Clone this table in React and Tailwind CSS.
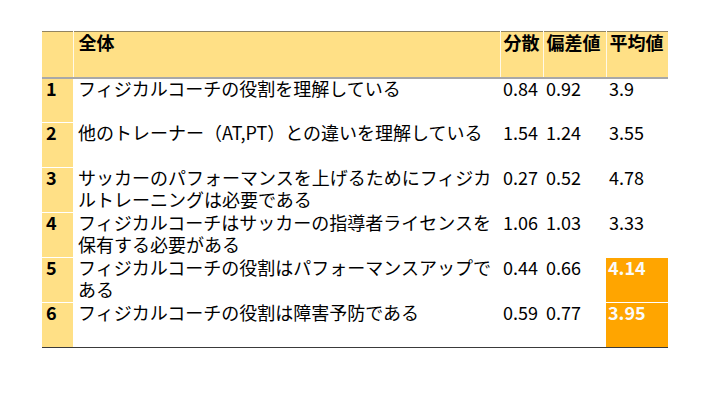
const rows = [
  { no: '1', lines: ['フィジカルコーチの役割を理解している'], v: '0.84', sd: '0.92', avg: '3.9' },
  { no: '2', lines: ['他のトレーナー（AT,PT）との違いを理解している'], v: '1.54', sd: '1.24', avg: '3.55' },
  { no: '3', lines: ['サッカーのパフォーマンスを上げるためにフィジカ', 'ルトレーニングは必要である'], v: '0.27', sd: '0.52', avg: '4.78' },
  { no: '4', lines: ['フィジカルコーチはサッカーの指導者ライセンスを', '保有する必要がある'], v: '1.06', sd: '1.03', avg: '3.33' },
  { no: '5', lines: ['フィジカルコーチの役割はパフォーマンスアップで', 'ある'], v: '0.44', sd: '0.66', avg: '4.14', hot: true },
  { no: '6', lines: ['フィジカルコーチの役割は障害予防である'], v: '0.59', sd: '0.77', avg: '3.95', hot: true },
];

export default function App() {
  return (
    <div
      className="w-[720px] h-[405px] bg-white pl-[42px] pt-[31px] text-[18px] leading-[22px] text-black"
      style={{ fontFamily: '"Noto Sans CJK JP", "Noto Sans", sans-serif' }}
    >
      <table className="w-[626px] table-fixed border-collapse">
        <colgroup>
          <col className="w-[31px]" />
          <col className="w-[427px]" />
          <col className="w-[43px]" />
          <col className="w-[63px]" />
          <col className="w-[62px]" />
        </colgroup>
        <thead>
          <tr className="h-[46px] bg-[#ffe086] border-t border-t-[#928460] border-b-2 border-b-[#a8a8a8] align-top">
            <th className="border-r border-r-white/80 p-0"></th>
            <th className="border-r border-r-white/80 pl-[5px] pt-0 text-left font-bold">
              <div className="-mt-[1px]">全体</div>
            </th>
            <th className="border-r border-r-white/80 pl-[3px] pt-0 text-left font-bold">
              <div className="-mt-[1px]">分散</div>
            </th>
            <th className="border-r border-r-white/80 pl-[3px] pt-0 text-left font-bold">
              <div className="-mt-[1px]">偏差値</div>
            </th>
            <th className="pl-[3px] pt-0 text-left font-bold">
              <div className="-mt-[1px]">平均値</div>
            </th>
          </tr>
        </thead>
        <tbody>
          {rows.map((r, i) => (
            <tr
              key={r.no}
              className={`h-[45px] align-top ${i === rows.length - 1 ? 'border-b border-b-[#3a3a3a]' : ''}`}
            >
              <td className={`bg-[#ffe086] pl-[4px] pt-0 font-bold ${i > 0 ? 'border-t border-t-white' : ''}`}>
                <div className="-mt-[2px]">{r.no}</div>
              </td>
              <td className="pl-[5px] pt-0 whitespace-nowrap">
                <div className="-mt-[2px]">
                  {r.lines.map((l) => (
                    <div key={l}>{l}</div>
                  ))}
                </div>
              </td>
              <td className="pl-[3px] pt-0">
                <div className="-mt-[2px]">{r.v}</div>
              </td>
              <td className="pl-[3px] pt-0">
                <div className="-mt-[2px]">{r.sd}</div>
              </td>
              <td
                className={
                  r.hot
                    ? `bg-[#ffa500] pl-[2px] pt-0 font-bold text-[#fafafa] ${i === 5 ? 'border-t border-t-white' : ''}`
                    : 'pl-[3px] pt-0'
                }
              >
                <div className="-mt-[2px]">{r.avg}</div>
              </td>
            </tr>
          ))}
        </tbody>
      </table>
    </div>
  );
}
